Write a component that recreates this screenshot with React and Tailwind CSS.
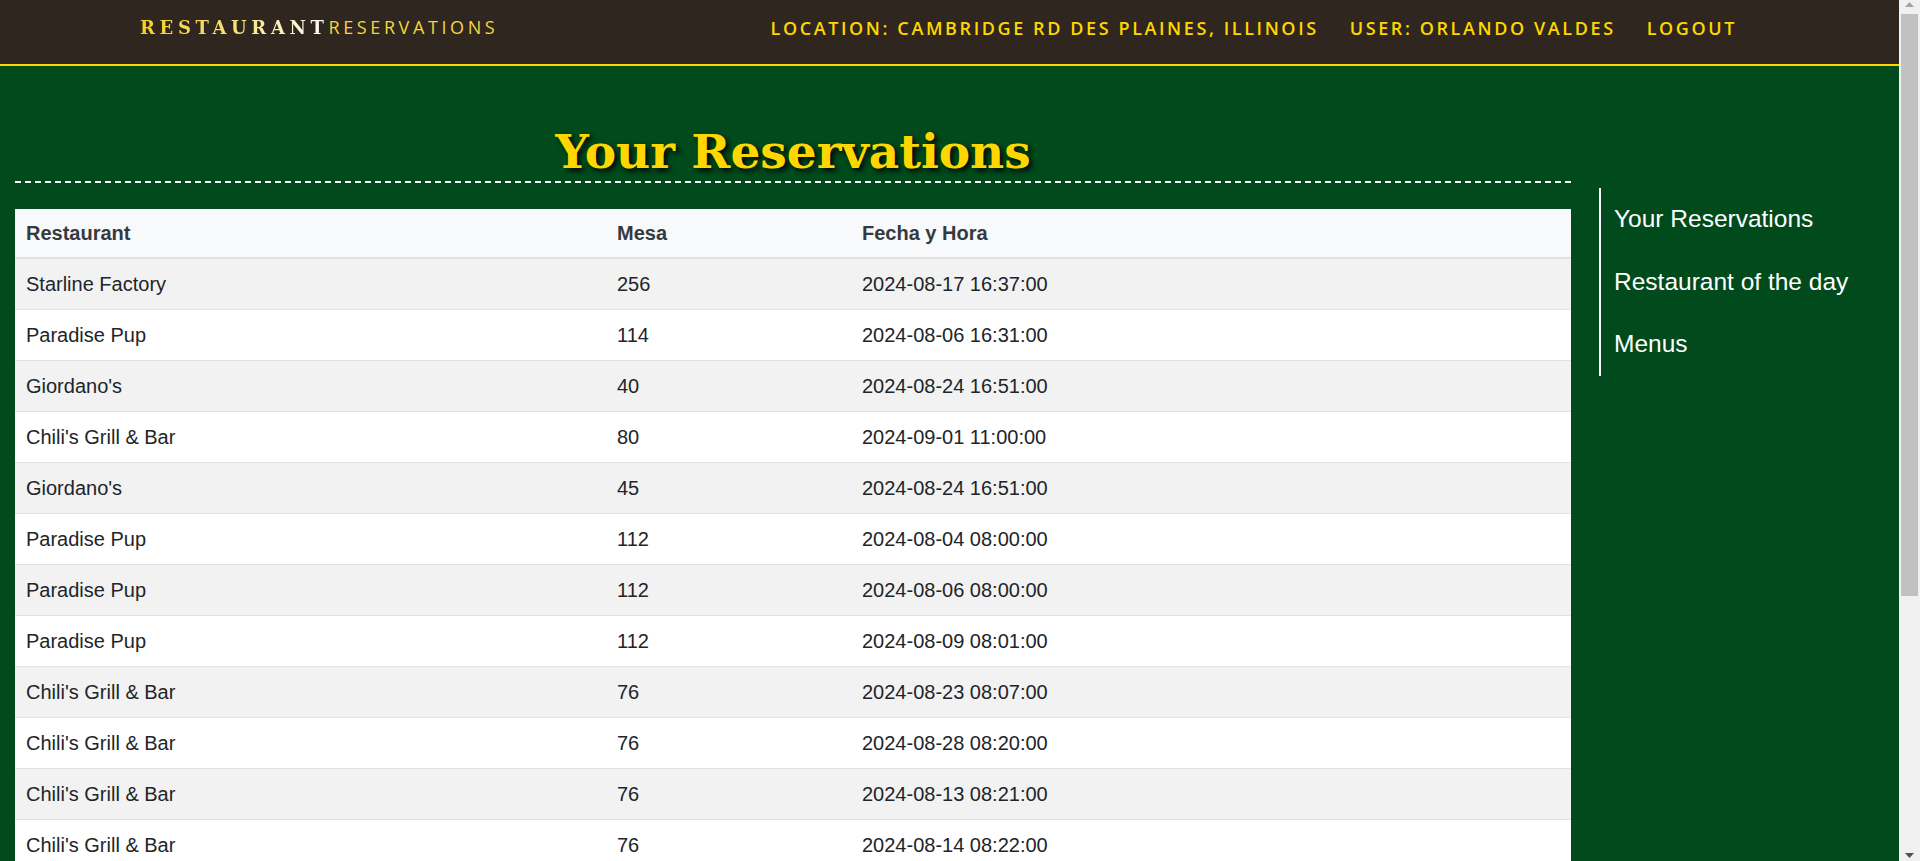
const ROWS = [
  ['Starline Factory', '256', '2024-08-17 16:37:00'],
  ['Paradise Pup', '114', '2024-08-06 16:31:00'],
  ["Giordano's", '40', '2024-08-24 16:51:00'],
  ["Chili's Grill & Bar", '80', '2024-09-01 11:00:00'],
  ["Giordano's", '45', '2024-08-24 16:51:00'],
  ['Paradise Pup', '112', '2024-08-04 08:00:00'],
  ['Paradise Pup', '112', '2024-08-06 08:00:00'],
  ['Paradise Pup', '112', '2024-08-09 08:01:00'],
  ["Chili's Grill & Bar", '76', '2024-08-23 08:07:00'],
  ["Chili's Grill & Bar", '76', '2024-08-28 08:20:00'],
  ["Chili's Grill & Bar", '76', '2024-08-13 08:21:00'],
  ["Chili's Grill & Bar", '76', '2024-08-14 08:22:00'],
  ["Chili's Grill & Bar", '76', '2024-08-15 08:25:00'],
  ['Starline Factory', '250', '2024-08-20 09:10:00'],
  ["Giordano's", '42', '2024-08-25 12:30:00'],
  ['Paradise Pup', '110', '2024-08-30 13:15:00'],
  ['Starline Factory', '256', '2024-09-02 18:00:00'],
  ["Giordano's", '40', '2024-09-05 19:45:00'],
  ["Chili's Grill & Bar", '80', '2024-09-07 20:00:00'],
]

const SIDE_LINKS = ['Your Reservations', 'Restaurant of the day', 'Menus']

function Header() {
  return (
    <header className="h-[66px] bg-[#2f261f] border-b-2 border-[#ffd700] flex items-start">
      {/* Logo */}
      <a href="#" className="ml-[140px] mt-[15px] leading-[24px] whitespace-nowrap">
        <span className="font-['DejaVu_Serif',serif] font-bold text-[18px] tracking-[4.6px] bg-linear-to-r from-[#f5d00c] via-[#f8e07a] to-[#ffffff] bg-clip-text text-transparent">
          RESTAURANT
        </span>
        <span className="font-['Open_Sans',sans-serif] font-normal text-[18px] tracking-[3.6px] text-[#f5d53c]">
          RESERVATIONS
        </span>
      </a>

      {/* Nav */}
      <nav className="ml-auto mr-[162px] mt-[16px] flex gap-[31px] font-['Open_Sans',sans-serif] font-semibold text-[18px] leading-[24px] tracking-[2.6px] text-[#ffd700] whitespace-nowrap">
        <a href="#">LOCATION: CAMBRIDGE RD DES PLAINES, ILLINOIS</a>
        <a href="#">USER: ORLANDO VALDES</a>
        <a href="#">LOGOUT</a>
      </nav>
    </header>
  )
}

function ReservationsTable() {
  return (
    <table className="w-full table-fixed border-separate border-spacing-0 font-['Liberation_Sans',Arial,sans-serif] text-left">
      <thead>
        <tr className="bg-[#f8f9fa] text-[#343a40] text-[20px] font-bold">
          <th className="w-[591px] px-[11px] py-[9px] leading-[30px] border-b-2 border-[#dee2e6]">Restaurant</th>
          <th className="w-[245px] px-[11px] py-[9px] leading-[30px] border-b-2 border-[#dee2e6]">Mesa</th>
          <th className="px-[11px] py-[9px] leading-[30px] border-b-2 border-[#dee2e6]">Fecha y Hora</th>
        </tr>
      </thead>
      <tbody className="text-[20px] text-[#212529]">
        {ROWS.map(([name, table, date], i) => (
          <tr key={i} className={i % 2 === 0 ? 'bg-[#f2f2f2]' : 'bg-white'}>
            <td className="px-[11px] py-[11px] leading-[28px] border-b border-[#dee2e6]">{name}</td>
            <td className="px-[11px] py-[11px] leading-[28px] border-b border-[#dee2e6]">{table}</td>
            <td className="px-[11px] py-[11px] leading-[28px] border-b border-[#dee2e6]">{date}</td>
          </tr>
        ))}
      </tbody>
    </table>
  )
}

// drawn window scrollbar, as in the screenshot
function Scrollbar() {
  return (
    <div className="w-[21px] shrink-0 h-screen bg-[#f1f1f1] flex flex-col items-center">
      <div className="h-[14px] w-full flex items-start justify-center pt-[2px]">
        <svg width="9" height="5" viewBox="0 0 9 5"><path d="M4.5 0L9 5H0z" fill="#a3a3a3" /></svg>
      </div>
      <div className="h-[582px] w-[17px] bg-[#c1c1c1]" />
      <div className="flex-1" />
      <div className="h-[14px] w-full flex items-end justify-center pb-[3px]">
        <svg width="9" height="5" viewBox="0 0 9 5"><path d="M0 0H9L4.5 5z" fill="#505050" /></svg>
      </div>
    </div>
  )
}

export default function App() {
  return (
    <div className="h-screen flex overflow-hidden bg-[#004a1c]">
      <div className="flex-1 min-w-0 h-screen overflow-hidden">
        <Header />
        <div className="flex pl-[15px]">
          {/* Main column */}
          <main className="w-[1556px] shrink-0">
            <h1 className="mt-[62px] pb-[6px] border-b-2 border-dashed border-white text-center font-['DejaVu_Serif',Georgia,serif] font-bold text-[47px] leading-none text-[#ffd700] [text-shadow:3px_3px_5px_rgba(0,0,0,0.9)]">
              Your Reservations
            </h1>
            <div className="mt-[26px]">
              <ReservationsTable />
            </div>
          </main>

          {/* Side menu */}
          <aside className="ml-[28px] mt-[122px]">
            <ul className="border-l-2 border-white pl-[13px] font-['Liberation_Sans',Arial,sans-serif] text-[24.5px] text-white">
              {SIDE_LINKS.map(label => (
                <li key={label} className="h-[62.67px] flex items-center whitespace-nowrap">
                  <a href="#">{label}</a>
                </li>
              ))}
            </ul>
          </aside>
        </div>
      </div>
      <Scrollbar />
    </div>
  )
}
